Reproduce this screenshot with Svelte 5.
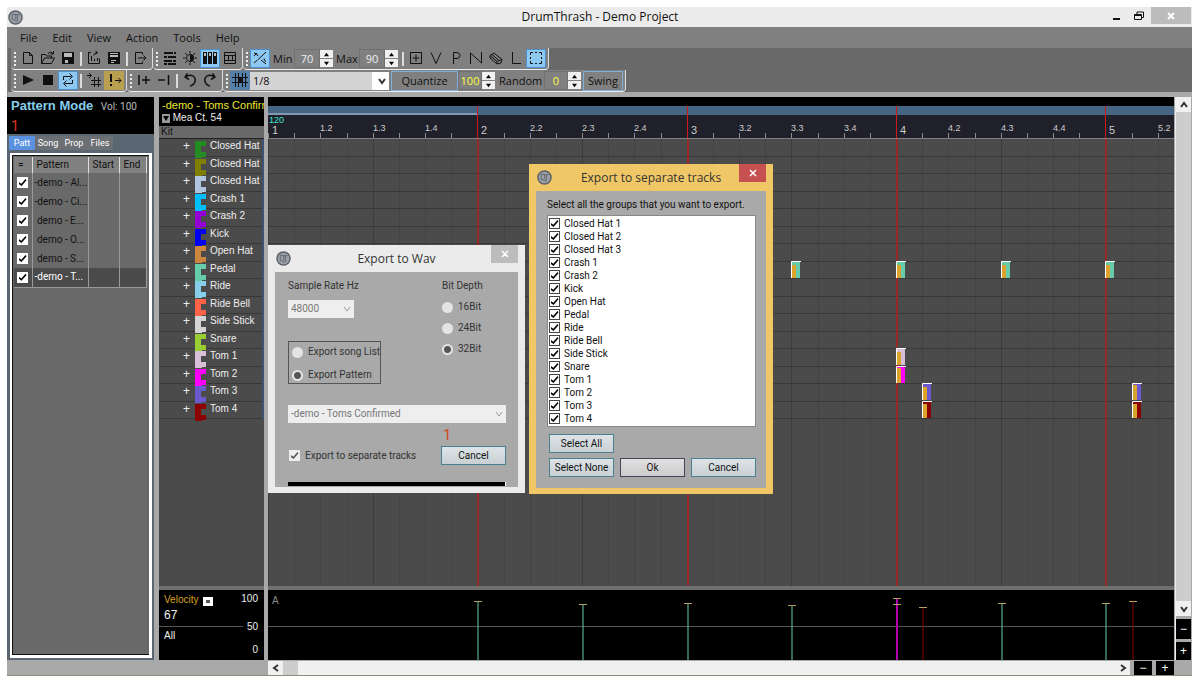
<script>
	const menus = ["File", "Edit", "View", "Action", "Tools", "Help"];
	const tabs = ["Patt", "Song", "Prop", "Files"];
	const patterns = ["-demo - Al...", "-demo - Ci...", " demo - E...", " demo - O...", " demo - S...", "-demo - T..."];

	const tracks = [
		{ name: "Closed Hat 1", color: "#228b22" },
		{ name: "Closed Hat 2", color: "#808000" },
		{ name: "Closed Hat 3", color: "#b0c4de" },
		{ name: "Crash 1", color: "#00bfff" },
		{ name: "Crash 2", color: "#9400d3" },
		{ name: "Kick", color: "#0000f0" },
		{ name: "Open Hat", color: "#cd853f" },
		{ name: "Pedal", color: "#66cdaa" },
		{ name: "Ride", color: "#87ceeb" },
		{ name: "Ride Bell", color: "#ff6347" },
		{ name: "Side Stick", color: "#d3d3d3" },
		{ name: "Snare", color: "#9acd32" },
		{ name: "Tom 1", color: "#d8bfd8" },
		{ name: "Tom 2", color: "#ff00ff" },
		{ name: "Tom 3", color: "#6a5acd" },
		{ name: "Tom 4", color: "#8b0000" }
	];

	// timeline geometry
	const barWidth = 628 / 3;
	const rowHeight = 280 / 16;
	const eighths = Array.from({ length: 35 }, (_, i) => i);
	const x = (eighth) => Math.round((eighth * barWidth) / 8);

	const beatLabel = (i) => {
		const bar = Math.floor(i / 8) + 1;
		const beat = (i % 8) / 2 + 1;
		return beat === 1 ? `${bar}` : `${bar}.${beat}`;
	};

	const notes = [
		{ at: 20, row: 7, level: 13 },
		{ at: 24, row: 7, level: 13 },
		{ at: 28, row: 7, level: 13 },
		{ at: 32, row: 7, level: 13 },
		{ at: 24, row: 12, level: 13 },
		{ at: 24, row: 13, level: 15 },
		{ at: 25, row: 14, level: 13 },
		{ at: 25, row: 15, level: 14 },
		{ at: 33, row: 14, level: 15 },
		{ at: 33, row: 15, level: 14 }
	];

	const sticks = [
		{ at: 8, top: 11, color: "#66cdaa" },
		{ at: 12, top: 14, color: "#66cdaa" },
		{ at: 16, top: 13, color: "#66cdaa" },
		{ at: 20, top: 15, color: "#66cdaa" },
		{ at: 24, top: 8, color: "#b000b0", wide: true },
		{ at: 24, top: 14, color: "#b000b0", wide: true },
		{ at: 25, top: 17, color: "#8b0000" },
		{ at: 28, top: 13, color: "#66cdaa" },
		{ at: 32, top: 13, color: "#66cdaa" },
		{ at: 33, top: 11, color: "#8b0000" }
	];

	// s = stroked path, f = filled path, c = light cut-out, on a 16 x 16 box
	const icons = {
		new: { s: "M3.5 2.5h6l3 3v8h-9zM9.5 2.5v3h3" },
		open: { s: "M1.5 13.5v-9h4l1 1.5h5v2M1.5 13.5l3-5.5h10l-3 5.5zM8 3.5q3-3 5 0M13.5 1v3h-3" },
		save: { f: "M2 2h12v12H2z", c: "M4 3h8v4H4zM5 10h3v3H5z" },
		import: { s: "M2.5 3v10.5h11v-5M5.5 6v5M8.5 9v2M11.5 8v3M7.5 5.5q1-3 4-3M9.5 1l2 1.5-2 2M5 2.5H2" },
		saveAs: { f: "M2 2h12v12H2z", c: "M4 3h8v1H4zM4 5h8v2H4zM5 10h5v1H5zM5 12h3v1H5z" },
		export: { s: "M10.5 4.5v-2h-7v11h7v-2M6 8h8M11.5 5.5L14 8l-2.5 2.5" },
		mixer: { s: "M2 3h9M12 3h2M2 7h3M6 7h8M2 11h8M11 11h3M2 14h3M6 14h8", w: 2 },
		sun: { s: "M8 4.5a3.5 3.5 0 1 0 0 7M8 1v2.5M8 12.5V15M1 8h2.5M12.5 8H15M3 3l2 2M13 3l-2 2M3 13l2-2M13 13l-2-2", f: "M8 4a4 4 0 0 1 0 8z" },
		drums: { f: "M1 2h4v12H1zM6 2h4v12H6zM11 2h4v12h-4z", c: "M2 3h2v3H2zM7 3h2v3H7zM12 3h2v3h-2z" },
		rack: { s: "M2.5 2.5h11v11h-11zM2.5 5.5h11M2.5 10.5h11M6.5 5.5v5M10.5 5.5v5" },
		curve: { s: "M2 6l3-3M6 9.5L14 2M2 13l3.5-3M2 3q3 0 4 3M9 10l5 4M12 8.5q.5 3 2 3" },
		plusBox: { s: "M2.5 2.5h11v11h-11zM8 4.5v7M4.5 8h7" },
		v: { s: "M3 2.5l5 11 5-11" },
		p: { s: "M5.5 14V2.5H9q3 .5 3 3t-3 3H5.5" },
		n: { s: "M2.5 14V3l11 10V2" },
		eraser: { s: "M2 5.5L6 3l8 6.5-1 3.5-4 1L2 8zM2 5.5l7 6V14M9 11.5l5-2M4 4.5l7 6" },
		l: { s: "M4.5 2v11.5H13" },
		select: { s: "M2.5 5V2.5H5M7 2.5h2M11 2.5h2.5V5M13.5 7v2M13.5 11v2.5H11M9 13.5H7M5 13.5H2.5V11M2.5 9V7" },
		play: { f: "M3 3l11 5-11 5z" },
		stop: { f: "M3 3h10v10H3z" },
		loop: { s: "M3.5 8V4.5h8M9.5 1.5l3 3-3 3M12.5 8v3.5h-8M6.5 8.5l-3 3 3 3" },
		snap: { s: "M1 3.5h4M3 1l2.5 2.5L3 6M8.5 5v10M12.5 5v10M5 8.5h10M5 12.5h10" },
		alert: { s: "M9 8.5h6M12.5 6L15 8.5 12.5 11", f: "M4 2h2v8H4zM4 12h2v2H4z" },
		addBar: { s: "M3 3v10M6 8h8M10 4v8", w: 1.5 },
		cutBar: { s: "M2 8h7M12.5 3v10", w: 1.5 },
		undo: { s: "M5.5 1.5L3 5l4 2.5M3 5q5-3 8-1t2 5.5-5 4.5", w: 1.5 },
		redo: { s: "M10.5 1.5L13 5 9 7.5M13 5q-5-3-8-1t-2 5.5 5 4.5", w: 1.5 },
		hash: { s: "M3.5 1v14M6.5 1v14M10.5 1v14M13.5 1v14M0 5.5h16M0 10.5h16", f: "M6 5h5v6H6z" }
	};

	let grid = "1/8";
	let depth = "32Bit";
	let source = "Export Pattern";
	let song = "-demo - Toms Confirmed";
	let rate = "48000";
</script>

{#snippet icon(name)}
	<svg class="icon" viewBox="0 0 16 16" aria-hidden="true">
		{#if icons[name].s}
			<path d={icons[name].s} fill="none" stroke="currentColor" stroke-width={icons[name].w || 1} />
		{/if}
		{#if icons[name].f}
			<path d={icons[name].f} fill="currentColor" />
		{/if}
		{#if icons[name].c}
			<path d={icons[name].c} fill="#bbb" />
		{/if}
	</svg>
{/snippet}

{#snippet tool(name, kind)}
	<button class="tool {kind || ''}" aria-label={name}>{@render icon(name)}</button>
{/snippet}

{#snippet spinner(label)}
	<span class="spinner">
		<button aria-label="{label} up"><svg viewBox="0 0 8 6"><path d="M1 5l3-4 3 4z" /></svg></button>
		<button aria-label="{label} down"><svg viewBox="0 0 8 6"><path d="M1 1l3 4 3-4z" /></svg></button>
	</span>
{/snippet}

{#snippet logo()}
	<svg class="logo" viewBox="0 0 16 16" aria-hidden="true">
		<circle cx="8" cy="8" r="7" fill="#9a9fa8" stroke="#5b6068" stroke-width="1.5" />
		<path d="M4.5 4.5h2q2 .5 2 3t-2 3h-2zM7 5h5.5M10 5v6.5q-1.5 1-3-.5" fill="none" stroke="#60656e" />
	</svg>
{/snippet}

{#snippet arrow(d)}
	<svg class="arrow" viewBox="0 0 8 8" aria-hidden="true"><path {d} /></svg>
{/snippet}

<div class="window">
	<header class="titlebar">
		{@render logo()}
		<h1>DrumThrash - Demo Project</h1>
		<div class="controls">
			<button aria-label="Minimize"><svg viewBox="0 0 12 12"><path d="M3 9h7" stroke-width="2" /></svg></button>
			<button aria-label="Restore"><svg viewBox="0 0 12 12"><path d="M1.5 4.5h7v5h-7zM4 4V2h6.5v5.5H9M1.5 5.5h7" /></svg></button>
			<button class="close" aria-label="Close"><svg viewBox="0 0 12 12"><path d="M3 3l6 6M9 3l-6 6" stroke-width="2" /></svg></button>
		</div>
	</header>

	<nav class="menubar">
		{#each menus as menu}
			<button>{menu}</button>
		{/each}
	</nav>

	<div class="toolbars">
		<div class="toolrow">
			<div class="group">
				<i class="grip"></i>
				{@render tool("new")}
				{@render tool("open")}
				{@render tool("save")}
				<i class="sep"></i>
				{@render tool("import")}
				{@render tool("saveAs")}
				<i class="sep"></i>
				{@render tool("export")}
			</div>
			<div class="group">
				<i class="grip"></i>
				{@render tool("mixer")}
				{@render tool("sun")}
				{@render tool("drums", "on")}
				{@render tool("rack")}
			</div>
			<div class="group">
				<i class="grip"></i>
				{@render tool("curve", "on")}
				<label class="min" for="min">Min</label>
				<input id="min" class="num" value="70" />
				{@render spinner("Min")}
				<label class="max" for="max">Max</label>
				<input id="max" class="num" value="90" />
				{@render spinner("Max")}
				<i class="sep"></i>
				{@render tool("plusBox")}
				{@render tool("v")}
				{@render tool("p")}
				{@render tool("n")}
				{@render tool("eraser")}
				{@render tool("l")}
				{@render tool("select", "on")}
			</div>
		</div>
		<div class="toolrow">
			<div class="group">
				<i class="grip"></i>
				{@render tool("play")}
				{@render tool("stop")}
				{@render tool("loop", "on")}
				<i class="sep"></i>
				{@render tool("snap")}
				{@render tool("alert", "gold")}
			</div>
			<div class="group">
				<i class="grip"></i>
				{@render tool("addBar")}
				{@render tool("cutBar")}
				<i class="sep"></i>
				{@render tool("undo")}
				{@render tool("redo")}
			</div>
			<div class="group">
				<i class="grip"></i>
				{@render tool("hash", "steel")}
				<div class="combo grid-combo">
					<select aria-label="Grid" bind:value={grid}>
						<option>1/4</option>
						<option>1/8</option>
						<option>1/16</option>
					</select>
					{@render arrow("M1 2l3 4 3-4")}
				</div>
				<button class="framed quantize">Quantize</button>
				<input class="num lit" aria-label="Quantize amount" value="100" />
				{@render spinner("Quantize")}
				<label class="random" for="random">Random</label>
				<input id="random" class="num lit" value="0" />
				{@render spinner("Random")}
				<button class="framed">Swing</button>
			</div>
		</div>
	</div>

	<main>
		<aside class="patterns">
			<div class="mode">
				<p><strong>Pattern Mode</strong> <span>Vol: 100</span></p>
				<p class="position">1</p>
			</div>
			<div class="tabs">
				{#each tabs as tab, i}
					<button class:active={i === 0}>{tab}</button>
				{/each}
			</div>
			<div class="list">
				<table>
					<thead>
						<tr><th>=</th><th>Pattern</th><th>Start</th><th>End</th></tr>
					</thead>
					<tbody>
						{#each patterns as pattern, i}
							<tr class:selected={i === 5}>
								<td><input type="checkbox" class="check plain" aria-label={pattern} checked /></td>
								<td>{pattern}</td>
								<td></td>
								<td></td>
							</tr>
						{/each}
					</tbody>
				</table>
			</div>
		</aside>

		<section class="tracks">
			<div class="song">
				<p class="name">-demo - Toms Confirmed</p>
				<p><button aria-label="Measures"><svg viewBox="0 0 8 8"><path d="M1 2h6L4 7z" /></svg></button> Mea Ct. 54</p>
			</div>
			<div class="kit">Kit</div>
			<ul>
				{#each tracks as track}
					<li>
						<b>+</b>
						<svg viewBox="0 0 11 17" preserveAspectRatio="none">
							<path d="M0 0h11v5H6v6h5v5H7v1H0z" fill={track.color} />
						</svg>
						<span>{track.name.replace(/^(Closed Hat) \d$/, "$1")}</span>
					</li>
				{/each}
			</ul>
			<div class="velocity-head">
				<div>
					<p class="gold-text">Velocity <button aria-label="Velocity menu"></button></p>
					<p class="value">67</p>
					<p>All</p>
				</div>
				<div class="scale"><span>100</span><span>50</span><span>0</span></div>
			</div>
		</section>

		<section class="timeline">
			<svg class="ruler">
				<rect width="100%" height="9" fill="#000" />
				<rect y="9" width="100%" height="9" fill="#456583" />
				<rect y="16" width={barWidth} height="2" fill="#8299b3" />
				{#each eighths as i}
					<path d="M{x(i) + 0.5} 36v5" stroke="#8a8a90" />
					{#if i % 8 === 0}
						{#if i > 0}<path d="M{x(i) + 0.5} 9v32" stroke="#d01818" />{/if}
						<text class="bar" x={x(i) + 4} y="37">{beatLabel(i)}</text>
					{:else if i % 2 === 0}
						<text class="beat" x={x(i)} y="34">{beatLabel(i)}</text>
					{/if}
				{/each}
				<text class="tempo" x="1" y="26">120</text>
			</svg>
			<svg class="roll">
				{#each eighths as i}
					<line x1={x(i) + 0.5} x2={x(i) + 0.5} y1="0" y2="100%" stroke={i % 4 === 0 ? "#3d3d3d" : "#434343"} />
				{/each}
				{#each tracks as track, row}
					<path d="M0 {Math.round((row + 1) * rowHeight) - 0.5}h4000" stroke="#383838" />
				{/each}
				{#each [1, 2, 3, 4] as bar}
					<line x1={x(bar * 8) + 1} x2={x(bar * 8) + 1} y1="0" y2="100%" stroke="#982828" stroke-width="2" />
				{/each}
				{#each notes as note}
					<g transform="translate({x(note.at)} {Math.round(note.row * rowHeight) - 1})">
						<rect width="9" height="17" fill={tracks[note.row].color} />
						<rect y={17 - note.level} width="5" height={note.level} fill="#dba32c" />
						<path d="M.5 17V.5H10" fill="none" stroke="#fff" />
					</g>
				{/each}
			</svg>
			<svg class="velocity">
				<path d="M0 36.5h4000" stroke="#555" />
				<text x="4" y="14">A</text>
				{#each sticks as stick}
					<line x1={x(stick.at) + 1} x2={x(stick.at) + 1} y1={stick.top} y2="100%" stroke={stick.color} stroke-width={stick.wide ? 2 : 1} />
					<path d="M{x(stick.at) - 3} {stick.top + 0.5}h8" stroke="#b8a060" />
				{/each}
			</svg>
		</section>

		<div class="vscroll">
			<button aria-label="Scroll up">{@render arrow("M1 6l3-4 3 4")}</button>
			<i class="track"></i>
			<button aria-label="Scroll down">{@render arrow("M1 2l3 4 3-4")}</button>
			<button class="zoom" aria-label="Shrink rows">−</button>
			<button class="zoom" aria-label="Grow rows">+</button>
		</div>
	</main>

	<footer>
		<div class="hscroll">
			<button aria-label="Scroll left">{@render arrow("M6 1L2 4l4 3")}</button>
			<i class="thumb"></i>
			<i class="track"></i>
			<button aria-label="Scroll right">{@render arrow("M2 1l4 3-4 3")}</button>
		</div>
		<button class="zoom" aria-label="Zoom out">−</button>
		<button class="zoom" aria-label="Zoom in">+</button>
	</footer>

	<div class="dialog wav" role="dialog" aria-label="Export to Wav">
		<header>
			{@render logo()}
			<h2>Export to Wav</h2>
			<button class="close" aria-label="Close"><svg viewBox="0 0 12 12"><path d="M3 3l6 6M9 3l-6 6" stroke-width="1.5" /></svg></button>
		</header>
		<div class="body">
			<div class="options">
				<div class="source">
					<label for="rate">Sample Rate Hz</label>
					<div class="combo rate">
						<select id="rate" bind:value={rate}>
							<option>44100</option>
							<option>48000</option>
						</select>
						{@render arrow("M1 2l3 4 3-4")}
					</div>
					<div class="box">
						{#each ["Export song List", "Export Pattern"] as item}
							<label><input type="radio" name="source" value={item} bind:group={source} />{item}</label>
						{/each}
					</div>
				</div>
				<div class="depth">
					<span>Bit Depth</span>
					{#each ["16Bit", "24Bit", "32Bit"] as item}
						<label><input type="radio" name="depth" value={item} bind:group={depth} />{item}</label>
					{/each}
				</div>
			</div>
			<div class="combo pattern">
				<select aria-label="Pattern" bind:value={song}>
					<option>-demo - Toms Confirmed</option>
				</select>
				{@render arrow("M1 2l3 4 3-4")}
			</div>
			<p class="count">1</p>
			<div class="actions">
				<label><input type="checkbox" class="check plain soft" checked />Export to separate tracks</label>
				<button class="push">Cancel</button>
			</div>
			<div class="progress"></div>
		</div>
	</div>

	<div class="dialog separate" role="dialog" aria-label="Export to separate tracks">
		<header>
			{@render logo()}
			<h2>Export to separate tracks</h2>
			<button class="close" aria-label="Close"><svg viewBox="0 0 12 12"><path d="M3 3l6 6M9 3l-6 6" stroke-width="1.5" /></svg></button>
		</header>
		<div class="body">
			<p>Select all the groups that you want to export.</p>
			<div class="groups">
				{#each tracks as track}
					<label><input type="checkbox" class="check" checked />{track.name}</label>
				{/each}
			</div>
			<div class="buttons">
				<button class="push">Select All</button>
				<button class="push">Select None</button>
				<button class="push default">Ok</button>
				<button class="push">Cancel</button>
			</div>
		</div>
	</div>
</div>

<style>
	:global(body) {
		margin: 0;
		background: #fff;
	}

	.window,
	.window * {
		box-sizing: border-box;
	}

	.window {
		position: relative;
		display: flex;
		flex-direction: column;
		height: calc(100vh - 15px);
		margin: 7px 8px 8px 7px;
		overflow: hidden;
		background: #a9a9a9;
		border-bottom: 1px solid #8e8a7e;
		font-family: "Liberation Sans", Arial, sans-serif;
		font-size: 10px;
		line-height: 12px;
		color: #111;
	}

	button,
	input,
	select {
		margin: 0;
		padding: 0;
		border: 0;
		border-radius: 0;
		background: none;
		font: inherit;
		color: inherit;
	}

	h1,
	h2,
	p,
	ul {
		margin: 0;
		padding: 0;
		font-weight: normal;
	}

	.titlebar {
		flex: none;
		display: grid;
		grid-template-columns: 1fr auto 1fr;
		height: 20px;
		padding-left: 1px;
		background: #ebebeb;
		align-items: center;
	}

	h1 {
		font-family: "Open Sans", sans-serif;
		font-size: 12px;
		line-height: 20px;
	}

	.logo {
		display: block;
		width: 15px;
		height: 15px;
	}

	.controls {
		display: flex;
		justify-content: flex-end;
		align-self: start;
		padding-right: 1px;
	}

	.controls button {
		width: 23px;
		height: 17px;
		display: grid;
		place-items: center;
	}

	.controls .close {
		width: 40px;
		margin-left: 1px;
		background: #bcbcbc;
		color: #fff;
	}

	.controls svg,
	.dialog .close svg {
		width: 12px;
		height: 12px;
		fill: none;
		stroke: currentColor;
	}

	.menubar {
		flex: none;
		display: flex;
		height: 21px;
		padding-left: 5px;
		background: #808080;
		font-family: "Open Sans", sans-serif;
		font-size: 11px;
	}

	.menubar button {
		padding: 0 7px 0 8px;
	}

	.toolbars {
		flex: none;
		height: 49px;
		padding-left: 3px;
		background: #696969;
		border-bottom: 5px solid #a9a9a9;
		border-left: 1px solid #808080;
		font-family: "Open Sans", sans-serif;
		font-size: 11px;
	}

	.toolrow {
		display: flex;
		height: 22px;
	}

	.group {
		display: flex;
		align-items: center;
		padding-right: 2px;
		background: #808080;
		border-right: 1px solid #ddd;
		border-bottom: 1px solid #eee;
		border-radius: 0 0 4px 4px;
	}

	.grip {
		width: 2px;
		height: 14px;
		margin: 0 2px 0 3px;
		background: repeating-linear-gradient(#eee 0 2px, transparent 2px 4px);
	}

	.sep {
		width: 2px;
		height: 14px;
		margin: 0 2px;
		background: #ddd;
	}

	.tool {
		display: grid;
		place-items: start center;
		width: 20px;
		height: 19px;
		border: 1px solid transparent;
	}

	.icon {
		width: 16px;
		height: 16px;
	}

	.tool.on {
		background: #8cc8f0;
		border: 1px solid #4a90d0;
	}

	.tool.gold {
		background: #b8a050;
	}

	.tool.steel {
		background: #5580a8;
	}

	.min {
		width: 24px;
		padding-left: 3px;
	}

	.max {
		width: 24px;
		padding-left: 1px;
	}

	.num {
		width: 26px;
		height: 19px;
		border: 1px solid #707070;
		text-align: center;
		color: #eee;
	}

	.num.lit {
		width: 24px;
		color: #ffff40;
	}

	.random {
		width: 47px;
		padding-left: 2px;
	}

	.spinner {
		display: grid;
		gap: 1px;
		width: 15px;
	}

	.spinner button {
		display: grid;
		place-items: center;
		width: 13px;
		height: 8px;
		background: #f0f0f0;
	}

	.spinner svg {
		width: 7px;
		height: 5px;
	}

	.combo {
		display: grid;
		align-items: center;
		background: #f0f0f0;
	}

	.combo select,
	.combo .arrow {
		grid-area: 1 / 1;
	}

	.combo select {
		appearance: none;
		width: 100%;
		height: 18px;
		padding-left: 3px;
	}

	.arrow {
		width: 8px;
		height: 8px;
		fill: none;
		stroke: #333;
		stroke-width: 2;
	}

	.combo .arrow {
		justify-self: end;
		margin-right: 3px;
		pointer-events: none;
	}

	.grid-combo {
		width: 139px;
		background: linear-gradient(90deg, #d3d3d3 122px, #fff 122px);
	}

	.framed {
		height: 20px;
		padding: 0 4px;
		border: 1px solid #7fb0dc;
	}

	.quantize {
		width: 67px;
		margin-left: 2px;
	}

	main {
		flex: 1;
		min-height: 0;
		display: grid;
		grid-template-columns: 148px 105px 1fr 13px;
		column-gap: 4px;
		background: #a9a9a9;
		padding-right: 1px;
	}

	.patterns {
		display: flex;
		flex-direction: column;
		margin-right: 1px;
		background: #5b6673;
		font-family: Roboto, "Liberation Sans", sans-serif;
	}

	.mode {
		height: 37px;
		padding: 3px 4px;
		background: #000;
		color: #bbb;
	}

	.mode strong {
		font-family: "Liberation Sans", sans-serif;
		font-size: 13px;
		margin-right: 5px;
		color: #87ceeb;
	}

	.mode .position {
		margin-top: 6px;
		font-size: 14px;
		line-height: 14px;
		color: #e03020;
	}

	.tabs {
		display: flex;
		padding: 2px 2px 0;
		margin-bottom: 3px;
		height: 16px;
		color: #fff;
		font-size: 9px;
	}

	.tabs button {
		width: 26px;
		background: #6c7074;
	}

	.tabs .active {
		background: #5b92e0;
	}

	.list {
		flex: 1;
		margin: 0 2px 2px 3px;
		padding: 2px;
		border: 2px solid #fff;
		border-width: 2px 3px 3px 2px;
		background: #696969;
		box-shadow: inset 1px 1px 0 #111, inset 0 -1px 0 #111;
	}

	table {
		width: 100%;
		table-layout: fixed;
		border-collapse: collapse;
		white-space: pre;
		color: #111;
	}

	th {
		height: 16px;
		padding: 0 4px;
		text-align: left;
		font-weight: normal;
		background: #808080;
		border-right: 1px solid #ddd;
	}

	th:first-child {
		width: 18px;
	}

	th:nth-child(2) {
		width: 56px;
	}

	th:nth-child(3) {
		width: 31px;
	}

	td {
		height: 19px;
		padding: 0 0 0 2px;
		border-right: 1px solid #999;
	}

	.selected td {
		background: #4b4b4b;
		border-bottom: 1px solid #999;
		color: #fff;
	}

	.check {
		appearance: none;
		flex: none;
		display: grid;
		place-items: center;
		width: 11px;
		height: 11px;
		background: #fff;
		border: 1px solid #444;
	}

	.check.plain {
		border: 0;
		margin-left: 1px;
	}

	.check.soft {
		background: #eee;
	}

	.check:checked::after {
		content: "";
		width: 8px;
		height: 7px;
		background: #000;
		clip-path: polygon(0 40%, 35% 68%, 88% 0, 100% 18%, 38% 100%, 0 68%);
	}

	.check.soft:checked::after {
		background: #555;
	}

	.tracks {
		display: flex;
		flex-direction: column;
		min-width: 0;
		background: #4b4b4b;
		color: #eee;
	}

	.song {
		height: 29px;
		padding: 2px 3px;
		overflow: hidden;
		white-space: nowrap;
		background: #000;
	}

	.song .name {
		font-size: 11px;
		line-height: 13px;
		color: #e8e830;
	}

	.song button {
		width: 8px;
		height: 9px;
		background: #999;
		vertical-align: middle;
	}

	.song svg {
		display: block;
	}

	.kit {
		height: 13px;
		padding-left: 2px;
		line-height: 11px;
		background: #696969;
		border-bottom: 1px solid #222;
		color: #111;
	}

	ul {
		flex: 1;
		display: grid;
		grid-template-rows: repeat(16, minmax(0, 1fr));
		max-height: 280px;
		list-style: none;
		border-right: 2px solid #3d5373;
	}

	li {
		display: grid;
		grid-template-columns: 8px 11px 1fr;
		grid-template-rows: minmax(0, 1fr);
		column-gap: 4px;
		padding-left: 24px;
		border-bottom: 1px solid #383838;
		white-space: nowrap;
	}

	li b {
		font-size: 12px;
		font-weight: normal;
		line-height: 14px;
	}

	li svg {
		width: 11px;
		height: 17px;
		margin-top: 2px;
	}

	li span {
		line-height: 14px;
	}

	.velocity-head {
		display: flex;
		justify-content: space-between;
		height: 74px;
		margin-top: auto;
		padding: 3px 6px 0 5px;
		border-top: 4px solid #6f6f6f;
		background: linear-gradient(#555, #555) 0 36px / 80% 1px no-repeat #000;
	}

	.velocity-head p {
		line-height: 14px;
	}

	.gold-text {
		color: #daa020;
	}

	.velocity-head button {
		width: 10px;
		height: 9px;
		margin-left: 2px;
		border: 3px solid #fff;
		background: #555;
	}

	.velocity-head .value {
		font-size: 12px;
		line-height: 16px;
		margin-bottom: 6px;
	}

	.scale {
		display: grid;
		text-align: right;
		grid-template-rows: 28px 23px;
	}

	.timeline {
		display: flex;
		flex-direction: column;
		min-width: 0;
		background: #4b4b4b;
	}

	.timeline svg {
		display: block;
		width: 100%;
		overflow: hidden;
	}

	.ruler {
		flex: none;
		height: 42px;
		background: #1f2029;
		border-bottom: 1px solid #808080;
		fill: #ccc;
	}

	.ruler .bar {
		font-size: 11px;
	}

	.ruler .beat {
		font-size: 9px;
	}

	.ruler .tempo {
		font-size: 9px;
		fill: #40e0d0;
	}

	.roll {
		flex: 1;
		min-height: 0;
	}

	.velocity {
		flex: none;
		height: 74px;
		border-top: 4px solid #6f6f6f;
		background: #000;
		fill: #888;
	}

	.vscroll {
		display: flex;
		flex-direction: column;
		margin-left: -3px;
		border-left: 1px solid #eee;
		width: 16px;
	}

	.vscroll button,
	.hscroll button {
		display: grid;
		place-items: center;
		flex: none;
		width: 15px;
		height: 15px;
		background: #f0f0f0;
	}

	.track {
		flex: 1;
		background: #cdcdcd;
	}

	.vscroll .zoom {
		height: 20px;
		margin-top: 3px;
	}

	.vscroll .zoom:last-child {
		height: 18px;
	}

	.vscroll .zoom,
	footer .zoom {
		background: #000;
		color: #fff;
		font-size: 12px;
	}

	footer {
		flex: none;
		display: flex;
		gap: 4px;
		height: 15px;
		padding: 1px 18px 0 261px;
	}

	footer .zoom {
		width: 18px;
		height: 14px;
	}

	.hscroll {
		flex: 1;
		display: flex;
	}

	.hscroll button {
		height: 14px;
	}

	.hscroll .track {
		background: #f0f0f0;
	}

	.thumb {
		width: 15px;
		background: #cdcdcd;
	}

	.dialog {
		position: absolute;
		padding: 0 7px 6px;
		background: #ebebeb;
		font-family: Roboto, "Liberation Sans", sans-serif;
	}

	.dialog header {
		display: grid;
		grid-template-columns: 27px 1fr 27px;
		height: 27px;
	}

	.dialog .logo {
		margin: 6px 0 0 1px;
	}

	.dialog h2 {
		font-family: "Open Sans", sans-serif;
		font-size: 12px;
		line-height: 27px;
		text-align: center;
		color: #333;
	}

	.dialog .close {
		height: 18px;
		display: grid;
		place-items: center;
		background: #bcbcbc;
		color: #fff;
	}

	.dialog .body {
		background: #a9a9a9;
	}

	.dialog label {
		display: flex;
		align-items: center;
	}

	.wav {
		left: 261px;
		top: 238px;
		width: 257px;
		color: #333;
	}

	.wav .body {
		padding: 8px 12px 1px 13px;
	}

	.options {
		display: grid;
		grid-template-columns: 93px 64px;
		justify-content: space-between;
	}

	.source {
		display: grid;
		grid-template-columns: 93px;
		gap: 8px;
	}

	.wav .combo {
		color: #777;
		background: #eee;
	}

	.wav .combo .arrow {
		stroke: #999;
		stroke-width: 1;
	}

	.rate {
		width: 66px;
	}

	.box {
		display: grid;
		gap: 11px;
		height: 43px;
		margin-top: 15px;
		padding: 4px 3px;
		border: 1px solid #555;
		white-space: nowrap;
	}

	input[type="radio"] {
		appearance: none;
		flex: none;
		width: 11px;
		height: 11px;
		margin-right: 5px;
		border-radius: 50%;
		background: #e4e4e4;
	}

	input[type="radio"]:checked {
		background: radial-gradient(#555 0 3px, #e4e4e4 4px);
	}

	.depth {
		display: grid;
		align-content: start;
		gap: 9px;
	}

	.pattern {
		margin-top: 21px;
	}

	.count {
		margin: 4px 0 3px 155px;
		font-size: 15px;
		line-height: 16px;
		color: #d04818;
	}

	.actions {
		display: flex;
		justify-content: space-between;
		align-items: center;
	}

	.actions .check {
		margin-right: 5px;
	}

	.push {
		width: 65px;
		height: 19px;
		background: linear-gradient(#dde4e8, #c8d0d4);
		border: 1px solid #4a8090;
		color: #111;
	}

	.push.default {
		background: linear-gradient(#e0e0e0, #ccc);
		border-color: #445;
	}

	.progress {
		height: 4px;
		margin-top: 17px;
		background: #000;
		border-right: 1px solid #fff;
	}

	.separate {
		left: 522px;
		top: 157px;
		width: 244px;
		background: #f0c766;
	}

	.separate .body {
		padding: 8px 10px 11px 11px;
	}

	.separate .close {
		background: #c75050;
	}

	.groups {
		display: grid;
		grid-template-rows: repeat(16, 1fr);
		height: 212px;
		margin-top: 4px;
		padding: 1px;
		background: #fff;
		border: 1px solid #888;
	}

	.groups .check {
		margin-right: 4px;
	}

	.buttons {
		display: grid;
		grid-template-columns: repeat(3, 65px);
		justify-content: space-between;
		gap: 5px;
		margin-top: 7px;
		padding-left: 2px;
	}

	.buttons .push:nth-child(2) {
		grid-column: 1;
	}
</style>
